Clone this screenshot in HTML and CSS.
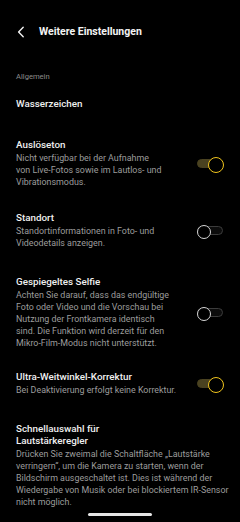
FILE: index.html
```html
<!DOCTYPE html>
<html lang="de">
<head>
<meta charset="utf-8">
<title>Weitere Einstellungen</title>
<link rel="stylesheet" href="styles.css">
</head>
<body>
<div class="screen">
  <header class="topbar">
    <svg class="back" width="8" height="12" viewBox="0 0 8 12"><path d="M6.2 1.2 L1.6 6 L6.2 10.8" fill="none" stroke="#f2f2f2" stroke-width="1.4" stroke-linecap="round" stroke-linejoin="round"/></svg>
    <h1 class="topbar-title">Weitere Einstellungen</h1>
  </header>

  <div class="section-label">Allgemein</div>

  <div class="row row-plain"><div class="title">Wasserzeichen</div></div>

  <div class="row row-first">
    <div class="text">
      <div class="title">Auslöseton</div>
      <div class="desc">Nicht verfügbar bei der Aufnahme<br>von Live-Fotos sowie im Lautlos- und<br>Vibrationsmodus.</div>
    </div>
    <span class="switch on"></span>
  </div>

  <div class="row row-tight">
    <div class="text">
      <div class="title">Standort</div>
      <div class="desc">Standortinformationen in Foto- und<br>Videodetails anzeigen.</div>
    </div>
    <span class="switch"></span>
  </div>

  <div class="row row-loose">
    <div class="text">
      <div class="title">Gespiegeltes Selfie</div>
      <div class="desc">Achten Sie darauf, dass das endgültige<br>Foto oder Video und die Vorschau bei<br>Nutzung der Frontkamera identisch<br>sind. Die Funktion wird derzeit für den<br>Mikro-Film-Modus nicht unterstützt.</div>
    </div>
    <span class="switch"></span>
  </div>

  <div class="row row-snug">
    <div class="text">
      <div class="title">Ultra-Weitwinkel-Korrektur</div>
      <div class="desc">Bei Deaktivierung erfolgt keine Korrektur.</div>
    </div>
    <span class="switch on"></span>
  </div>

  <div class="row row-loose row-wide">
    <div class="text">
      <div class="title">Schnellauswahl für Lautstärkeregler</div>
      <div class="desc">Drücken Sie zweimal die Schaltfläche „Lautstärke verringern“, um die Kamera zu starten, wenn der Bildschirm ausgeschaltet ist. Dies ist während der Wiedergabe von Musik oder bei blockiertem IR-Sensor nicht möglich.</div>
    </div>
  </div>

  <div class="home-indicator"></div>
</div>
</body>
</html>
```

FILE: styles.css
```css
* { box-sizing: border-box; }
html, body {
  margin: 0;
  padding: 0;
  background: #000;
}
body {
  font-family: Roboto, "Noto Sans", "Liberation Sans", sans-serif;
  color: #eeeeee;
}
.screen {
  position: relative;
  width: 240px;
  height: 522px;
  overflow: hidden;
  background: #000;
}
.topbar {
  height: 64px;
  display: flex;
  align-items: center;
  padding-left: 17px;
}
.back {
  display: block;
  margin-right: 14px;
}
.topbar-title {
  margin: 0;
  font-size: 10.5px;
  font-weight: 700;
  line-height: 12px;
  color: #f4f4f4;
}
.section-label {
  margin-top: 8px;
  padding-left: 16px;
  font-size: 7.6px;
  line-height: 10px;
  color: #8c8c8c;
}
.row {
  display: flex;
  align-items: center;
  justify-content: space-between;
  padding: 0 17px 0 16px;
}
.row-plain { margin-top: 16px; }
.row-first { margin-top: 29px; }
.row-tight { margin-top: 23.5px; }
.row-snug { margin-top: 21.5px; }
.row-loose { margin-top: 26.5px; }
.text {
  flex: 0 0 170px;
  width: 170px;
}
.row-wide { padding-right: 8px; }
.row-wide .text {
  width: auto;
  flex: 1 1 auto;
}
.title {
  font-size: 9.8px;
  font-weight: 500;
  line-height: 12px;
  color: #f0f0f0;
  max-width: 150px;
}
.desc {
  margin-top: 2px;
  font-size: 8.9px;
  line-height: 11.85px;
  color: #9c9c9c;
}
.switch {
  position: relative;
  flex: 0 0 26px;
  width: 26px;
  height: 9px;
  border-radius: 5px;
  border: 1px solid #3c3c3c;
  background: #0c0c0c;
}
.switch::after {
  content: "";
  position: absolute;
  top: 50%;
  left: -1px;
  width: 12px;
  height: 12px;
  margin-top: -6px;
  border-radius: 50%;
  border: 1.6px solid #d6d6d6;
  background: #000;
}
.switch.on {
  border-color: #4a4220;
  background: #4a4220;
}
.switch.on::after {
  left: auto;
  right: -2px;
  width: 14px;
  height: 14px;
  margin-top: -7px;
  border: 1.8px solid #f0c41c;
}
.home-indicator {
  position: absolute;
  left: 88px;
  bottom: 6px;
  width: 64px;
  height: 3px;
  border-radius: 2px;
  background: #e6e6e6;
}
```
